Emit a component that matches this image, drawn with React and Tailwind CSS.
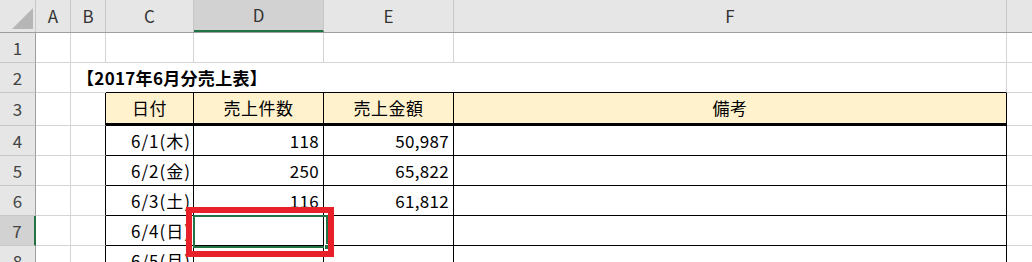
import React from "react";

const font = { fontFamily: '"Noto Sans CJK JP", "Noto Sans", sans-serif' };

// column widths: row header, A, B, C, D, E, F, G
function HeaderRow() {
  const letters = [
    ["A", "w-[35px]", false],
    ["B", "w-[35px]", false],
    ["C", "w-[88px]", false],
    ["D", "w-[130px]", true],
    ["E", "w-[130px]", false],
    ["F", "w-[553px]", false],
  ];
  return (
    <div className="flex h-[33px] bg-[#e6e6e6] border-b border-[#9e9e9e]">
      <div className="relative w-[36px] border-r border-[#c8c8c8] shrink-0">
        <div className="absolute left-[12px] top-[8px] w-0 h-0 border-l-[21px] border-l-transparent border-b-[21px] border-b-[#b6b6b6]" />
      </div>
      {letters.map(([l, w, sel]) => (
        <div
          key={l}
          className={`${w} shrink-0 flex items-center justify-center text-[17px] text-[#333] border-r border-[#c8c8c8] ${
            sel ? "bg-[#d2d2d2] border-b-2 border-b-[#217346] text-[#1f5c38]" : ""
          }`}
        >
          {l}
        </div>
      ))}
      <div className="w-[25px] shrink-0" />
    </div>
  );
}

function RowHead({ n, sel }) {
  return (
    <div
      className={`w-[36px] shrink-0 flex items-center justify-center text-[17px] text-[#444] border-b border-[#c8c8c8] ${
        sel ? "bg-[#d2d2d2] border-r-2 border-r-[#217346]" : "bg-[#e6e6e6] border-r border-r-[#9e9e9e]"
      }`}
    >
      {n}
    </div>
  );
}

const data = [
  { n: 4, date: "6/1(木)", count: "118", amount: "50,987" },
  { n: 5, date: "6/2(金)", count: "250", amount: "65,822" },
  { n: 6, date: "6/3(土)", count: "116", amount: "61,812" },
  { n: 7, date: "6/4(日)", count: "", amount: "", sel: true },
  { n: 8, date: "6/5(月)", count: "", amount: "" },
];

export default function App() {
  return (
    <div className="relative w-[1032px] h-[262px] overflow-hidden bg-white text-black" style={font}>
      <HeaderRow />

      {/* row 1 */}
      <div className="flex h-[30px]">
        <RowHead n={1} />
        <div className="w-[35px] shrink-0 border-r border-b border-[#d4d4d4]" />
        <div className="w-[35px] shrink-0 border-r border-b border-[#d4d4d4]" />
        <div className="w-[88px] shrink-0 border-r border-b border-[#d4d4d4]" />
        <div className="w-[130px] shrink-0 border-r border-b border-[#d4d4d4]" />
        <div className="w-[130px] shrink-0 border-r border-b border-[#d4d4d4]" />
        <div className="w-[553px] shrink-0 border-r border-b border-[#d4d4d4]" />
        <div className="w-[25px] shrink-0 border-b border-[#d4d4d4]" />
      </div>

      {/* row 2: title */}
      <div className="relative flex h-[30px]">
        <RowHead n={2} />
        <div className="w-[35px] shrink-0 border-r border-b border-[#d4d4d4]" />
        <div className="w-[35px] shrink-0 border-b border-[#d4d4d4]" />
        <div className="w-[88px] shrink-0 border-b border-black" />
        <div className="w-[130px] shrink-0 border-b border-black" />
        <div className="w-[130px] shrink-0 border-b border-black" />
        <div className="w-[553px] shrink-0 border-r border-[#d4d4d4] border-b border-b-black" />
        <div className="w-[25px] shrink-0 border-b border-[#d4d4d4]" />
        <div className="absolute left-[77px] top-[1px] text-[17px] font-bold leading-[28px] tracking-[0.3px] whitespace-nowrap">
          【2017年6月分売上表】
        </div>
      </div>

      {/* row 3: table header */}
      <div className="flex h-[33px]">
        <RowHead n={3} />
        <div className="w-[35px] shrink-0 border-r border-b border-[#d4d4d4]" />
        <div className="w-[35px] shrink-0 border-r border-r-black border-b border-b-[#d4d4d4]" />
        <div className="w-[88px] shrink-0 flex items-center justify-center bg-[#fff2cc] text-[17px] tracking-[0.5px] border-r border-black border-b-[3px]">日付</div>
        <div className="w-[130px] shrink-0 flex items-center justify-center bg-[#fff2cc] text-[17px] tracking-[0.5px] border-r border-black border-b-[3px]">売上件数</div>
        <div className="w-[130px] shrink-0 flex items-center justify-center bg-[#fff2cc] text-[17px] tracking-[0.5px] border-r border-black border-b-[3px]">売上金額</div>
        <div className="w-[553px] shrink-0 flex items-center justify-center bg-[#fff2cc] text-[17px] tracking-[0.5px] border-r border-black border-b-[3px]">備考</div>
        <div className="w-[25px] shrink-0 border-b border-[#d4d4d4]" />
      </div>

      {data.map((r) => (
        <div key={r.n} className="flex h-[30px]">
          <RowHead n={r.n} sel={r.sel} />
          <div className="w-[35px] shrink-0 border-r border-b border-[#d4d4d4]" />
          <div className="w-[35px] shrink-0 border-r border-r-black border-b border-b-[#d4d4d4]" />
          <div className="w-[88px] shrink-0 flex items-center justify-end pr-[2px] text-[17px] tracking-[1px] border-r border-b border-black whitespace-nowrap">{r.date}</div>
          <div className="w-[130px] shrink-0 flex items-center justify-end pr-[4px] text-[17px] tracking-[0.3px] border-r border-b border-black">{r.count}</div>
          <div className="w-[130px] shrink-0 flex items-center justify-end pr-[4px] text-[17px] tracking-[0.3px] border-r border-b border-black">{r.amount}</div>
          <div className="w-[553px] shrink-0 border-r border-b border-black" />
          <div className="w-[25px] shrink-0 border-b border-[#d4d4d4]" />
        </div>
      ))}

      {/* active cell D7 */}
      <div className="absolute left-[193px] top-[215px] w-[135px] h-[33px] border-2 border-[#217346]">
        <div className="absolute right-[-4px] bottom-[-4px] w-[6px] h-[6px] bg-[#217346] border border-white" />
      </div>

      {/* red annotation box */}
      <div className="absolute left-[186px] top-[207px] w-[148px] h-[50px] border-[6px] border-[#e8202a]" />
    </div>
  );
}
